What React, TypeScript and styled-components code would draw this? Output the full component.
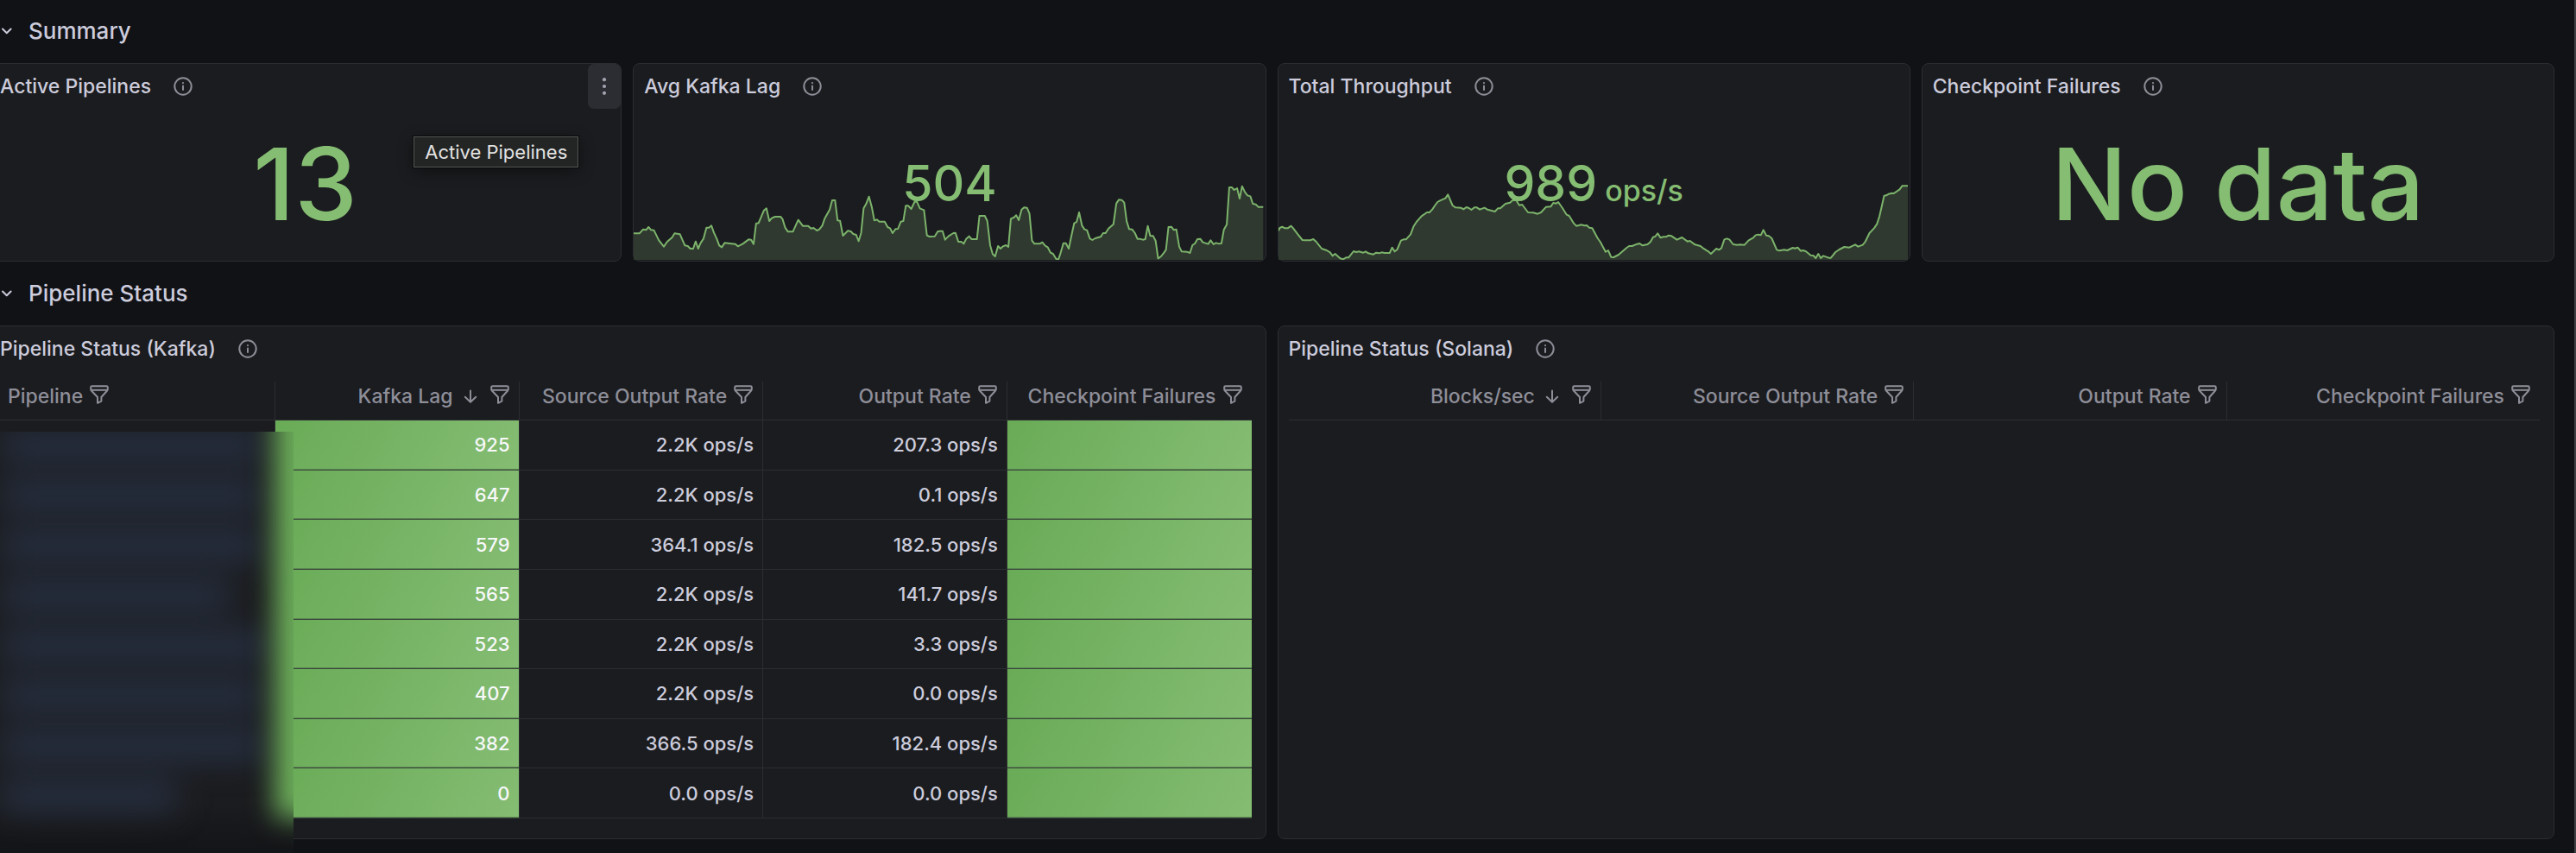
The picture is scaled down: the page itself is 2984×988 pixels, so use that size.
import React from "react";
import styled, { createGlobalStyle, css } from "styled-components";

const color = {
  page: "#111216",
  panel: "#1b1c1f",
  line: "#2c2d31",
  text: "#ccccdc",
  muted: "#8e8e99",
  green: "#85bd73",
};

const GlobalStyle = createGlobalStyle`
  *, *::before, *::after { box-sizing: border-box; }
  html { background: ${color.page}; }
  body {
    margin: 0;
    min-height: 100vh;
    overflow-x: hidden;
    background: ${color.page};
    border-right: 2px solid #3f4043;
    color: ${color.text};
    font-family: Inter, "Liberation Sans", sans-serif;
    font-size: 23px;
    font-weight: 500;
    line-height: 32px;
  }
  h2, h3 { margin: 0; font-weight: 500; }
  button { font: inherit; color: inherit; border: 0; background: none; padding: 0; cursor: pointer; }
`;

const Dashboard = styled.main`
  margin: -1px 23px 0 -13px;
  padding-bottom: 16px;
`;

const SectionHeader = styled.h2`
  height: 74px;
  display: flex;
  align-items: center;
  padding-left: 13px;
  font-size: 26px;
`;

const Toggle = styled.button`
  display: flex;
  align-items: center;
  gap: 18px;
`;

const PanelRow = styled.div<{ $columns: number }>`
  display: grid;
  grid-template-columns: repeat(${(p) => p.$columns}, minmax(0, 1fr));
  gap: 13px;
`;

const Panel = styled.section<{ $tall?: boolean }>`
  position: relative;
  display: flex;
  flex-direction: column;
  min-height: ${(p) => (p.$tall ? 595 : 230)}px;
  background: ${color.panel};
  border: 1px solid ${color.line};
  border-radius: 8px;
`;

const PanelHeader = styled.header`
  height: 52px;
  display: flex;
  align-items: center;
  justify-content: space-between;
  padding-left: 12px;
`;

const PanelTitle = styled.div`
  display: flex;
  align-items: center;
  gap: 26px;
  h3 { font-size: 23px; }
`;

const InfoButton = styled.button`
  display: flex;
  color: ${color.muted};
`;

const MenuButton = styled.button`
  width: 38px;
  height: 52px;
  display: flex;
  align-items: center;
  justify-content: center;
  border-radius: 7px;
  background: #2c2d32;
  color: #a3a3b0;
`;

const StatBody = styled.div`
  flex: 1;
  position: relative;
  display: flex;
  align-items: center;
  justify-content: center;
  padding-bottom: 2px;
`;

const StatValue = styled.div<{ $large?: boolean }>`
  position: relative;
  font-size: ${(p) => (p.$large ? 116 : 57)}px;
  line-height: ${(p) => (p.$large ? 140 : 70)}px;
  color: ${color.green};
  white-space: pre;
`;

const Unit = styled.span`
  font-size: 34px;
  line-height: 34px;
`;

const Spark = styled.svg`
  position: absolute;
  left: 0;
  bottom: 1px;
  width: calc(100% - 2px);
  height: 88px;
`;

const Tooltip = styled.div`
  position: absolute;
  top: 84px;
  right: 49px;
  padding: 0 12px;
  line-height: 34px;
  font-size: 22px;
  font-weight: 400;
  color: #e2e2e2;
  background: #232524;
  border: 1px solid #555756;
  outline: 1px solid #08090a;
  box-shadow: 0 4px 18px rgba(0, 0, 0, 0.45);
  white-space: nowrap;
`;

const TableBody = styled.div`
  padding: 12px 16px 0 12px;
`;

const DataTable = styled.table`
  width: 100%;
  table-layout: fixed;
  border-collapse: separate;
  border-spacing: 0;
`;

const FullTable = styled(DataTable)`
  height: 506px;
`;

const HeadCell = styled.th<{ $left?: boolean; $wide?: boolean }>`
  width: ${(p) => (p.$wide ? "22%" : "auto")};
  height: 45px;
  padding: 0 ${(p) => (p.$left ? 0 : 11)}px 11px ${(p) => (p.$left ? 9 : 0)}px;
  border-bottom: 1px solid ${color.line};
  border-right: 1px solid ${color.line};
  font-weight: 500;
  color: ${color.muted};
  white-space: nowrap;
  &:last-child { border-right: 0; }
`;

const HeadContent = styled.div<{ $left?: boolean }>`
  display: flex;
  align-items: center;
  justify-content: ${(p) => (p.$left ? "flex-start" : "flex-end")};
  gap: 8px;
`;

const Sort = styled.button`
  display: flex;
  align-items: center;
  gap: 8px;
`;

const FilterButton = styled.button<{ $spaced?: boolean }>`
  display: flex;
  padding-bottom: 4px;
  margin-left: ${(p) => (p.$spaced ? 3 : 0)}px;
`;

const Cell = styled.td<{ $filled?: boolean }>`
  padding: 0 10px 0 0;
  font-size: 22px;
  text-align: right;
  border-right: 1px solid ${color.line};
  border-bottom: 1px solid ${color.line};
  &:last-child { border-right: 0; }
  ${(p) =>
    p.$filled &&
    css`
      color: #f7f8fa;
      background: linear-gradient(120deg, #69ab57, #85bd73);
      background-clip: padding-box;
      border-bottom-color: #3a463c;
      box-shadow: inset 0 -1px 0 #5a8751;
    `}
`;

/* Frosted cover that hides the pipeline names. */
const Cover = styled.div`
  position: absolute;
  left: 12px;
  top: 122px;
  width: 340px;
  height: 488px;
  overflow: hidden;
  background: linear-gradient(#1b1c1f 430px, #141518 484px);
`;

const CoverEdge = styled.div`
  position: absolute;
  left: 318px;
  top: -60px;
  width: 120px;
  height: 508px;
  background: #6cad5a;
  filter: blur(15px);
`;

const CoverLines = styled.div`
  display: flex;
  flex-direction: column;
  gap: 26px;
  padding-left: 2px;
  filter: blur(18px);
`;

const CoverLine = styled.div`
  height: 32px;
  background: #283245;
`;

function InfoIcon() {
  return (
    <svg width="22" height="22" viewBox="0 0 22 22" fill="none" stroke="currentColor" strokeWidth="2" strokeLinecap="round">
      <circle cx="11" cy="11" r="9.7" />
      <path d="M11 10.6v4.4" />
      <circle cx="11" cy="7.1" r="1.1" fill="currentColor" stroke="none" />
    </svg>
  );
}

function FilterIcon() {
  return (
    <svg width="22" height="22" viewBox="0 0 22 22" fill="none" stroke="currentColor" strokeWidth="2" strokeLinejoin="round">
      <path d="M2.6 1.2h16.8c.8 0 1.4.6 1.4 1.4v2.1c0 .7-.3 1.3-.7 1.8L13.4 14v4.6L9 20.8V14L1.9 6.5c-.5-.5-.7-1.1-.7-1.8V2.6c0-.8.6-1.4 1.4-1.4z" />
      <path d="M1.6 5.8h18.8" />
    </svg>
  );
}

function ArrowDownIcon() {
  return (
    <svg width="24" height="22" viewBox="0 0 24 22" fill="none" stroke="currentColor" strokeWidth="2" strokeLinecap="round" strokeLinejoin="round">
      <path d="M12 4.5v13M5.8 11.8l6.2 6 6.2-6" />
    </svg>
  );
}

function ChevronIcon() {
  return (
    <svg width="15" height="22" viewBox="0 0 15 22" fill="none" stroke="currentColor" strokeWidth="2" strokeLinecap="round" strokeLinejoin="round">
      <path d="M3 8.5l4.8 4.8 4.8-4.8" />
    </svg>
  );
}

function DotsIcon() {
  return (
    <svg width="6" height="22" viewBox="0 0 6 22" fill="currentColor">
      <circle cx="3" cy="3.2" r="2.1" />
      <circle cx="3" cy="11" r="2.1" />
      <circle cx="3" cy="18.8" r="2.1" />
    </svg>
  );
}

const lagSeries =
  "10,631 24,631 33,617 40,619 46,609 52,619 59,620 71,655 83,677 91,660 103,645 109,631 122,634 134,673 141,675 147,684 154,684 160,659 166,684 172,664 179,649 186,611 192,611 198,604 204,628 211,650 217,673 223,679 230,664 242,666 256,668 262,676 274,667 288,652 294,653 300,668 306,597 312,595 325,551 331,544 338,588 344,578 352,573 365,573 370,581 376,610 383,625 395,625 408,584 419,605 432,605 439,614 445,612 453,621 459,617 466,604 472,579 484,548 490,516 497,516 503,586 509,587 516,639 528,622 535,624 541,633 548,636 554,658 560,629 566,544 572,529 579,503 586,541 592,586 598,583 604,590 617,590 624,609 630,613 636,630 643,616 649,615 656,590 662,588 668,535 674,535 681,546 690,519 695,521 702,544 712,550 719,638 725,642 738,641 745,625 750,623 757,623 763,653 771,641 783,630 788,629 795,660 802,660 808,667 814,650 821,641 827,651 840,651 846,570 859,570 865,588 872,673 878,703 884,711 891,675 897,684 903,676 910,672 916,678 922,580 929,576 935,568 941,585 948,548 954,541 961,542 967,562 973,656 979,667 992,667 998,662 1005,674 1011,679 1018,698 1024,702 1032,721 1037,721 1042,700 1049,665 1055,665 1062,684 1068,642 1075,596 1081,591 1087,558 1094,604 1100,617 1106,620 1113,649 1119,654 1126,648 1139,643 1145,630 1151,630 1158,614 1170,599 1177,527 1183,514 1190,515 1196,524 1202,589 1208,616 1215,617 1222,630 1228,650 1234,650 1241,653 1247,651 1253,605 1259,640 1266,640 1272,657 1278,718 1285,711 1291,700 1297,688 1303,609 1310,608 1316,619 1322,617 1329,677 1335,694 1348,695 1355,699 1361,672 1367,666 1373,651 1380,650 1386,662 1399,668 1405,655 1412,669 1418,664 1425,667 1431,666 1437,618 1444,600 1450,471 1456,471 1462,480 1469,474 1475,510 1481,467 1488,488 1494,499 1501,502 1507,528 1514,530 1520,539 1532,539";

const throughputSeries =
  "23,622 26,612 32,608 38,613 45,613 53,605 58,613 69,634 80,654 86,655 98,655 106,651 113,660 126,684 138,690 146,697 152,709 158,702 170,718 177,721 184,715 190,715 202,693 208,696 215,694 225,698 231,694 237,700 249,704 256,698 263,700 269,697 276,699 288,699 294,680 300,694 306,687 315,656 321,652 327,652 338,634 345,607 352,591 364,571 377,558 383,558 390,547 396,534 402,522 408,517 421,509 427,496 438,534 445,541 458,542 464,547 471,540 477,543 483,549 490,541 496,541 503,548 514,542 521,548 539,555 546,544 552,544 564,528 575,524 581,516 590,516 597,533 604,531 618,558 630,559 641,563 649,558 661,539 672,538 678,525 685,527 690,522 700,543 710,566 716,570 727,596 733,605 745,601 752,604 758,603 764,611 771,613 784,648 790,660 803,695 809,690 816,713 822,714 834,705 853,681 859,675 866,675 878,668 884,666 891,673 903,669 910,660 916,644 921,642 927,631 934,646 941,643 947,643 953,638 960,640 973,653 985,645 998,659 1004,657 1016,670 1029,675 1035,682 1048,694 1054,702 1067,684 1073,688 1079,682 1086,652 1092,649 1098,652 1107,669 1117,671 1123,670 1134,671 1144,655 1155,646 1160,638 1166,635 1173,637 1179,619 1186,638 1192,640 1199,648 1211,688 1217,691 1229,688 1236,690 1249,681 1254,683 1261,680 1268,692 1273,690 1280,693 1292,707 1298,708 1304,717 1310,702 1316,717 1322,709 1335,716 1340,716 1351,696 1360,687 1372,678 1384,680 1398,670 1405,677 1416,671 1422,660 1432,630 1443,613 1450,598 1456,571 1467,500 1472,499 1478,494 1485,491 1490,492 1504,478 1510,466 1524,466";

function Sparkline({ points, from, to }: { points: string; from: number; to: number }) {
  return (
    <Spark viewBox={`${from} 459 ${to - from} 264`} preserveAspectRatio="none" aria-hidden="true">
      <polygon points={`${from},723 ${points} ${to},723`} fill="#2f392f" />
      <polyline points={points} fill="none" stroke="#7cb36b" strokeWidth="2" strokeLinejoin="round" vectorEffect="non-scaling-stroke" />
    </Spark>
  );
}

function Title({ text, menu }: { text: string; menu?: boolean }) {
  return (
    <PanelHeader>
      <PanelTitle>
        <h3>{text}</h3>
        <InfoButton aria-label={`About ${text}`}>
          <InfoIcon />
        </InfoButton>
      </PanelTitle>
      {menu && (
        <MenuButton aria-label={`${text} menu`}>
          <DotsIcon />
        </MenuButton>
      )}
    </PanelHeader>
  );
}

function Section({ title, children }: { title: string; children: React.ReactNode }) {
  return (
    <div>
      <SectionHeader>
        <Toggle aria-expanded="true">
          <ChevronIcon />
          {title}
        </Toggle>
      </SectionHeader>
      {children}
    </div>
  );
}

type HeadProps = { text: string; left?: boolean; wide?: boolean; sorted?: boolean };

function Head({ text, left, wide, sorted }: HeadProps) {
  return (
    <HeadCell scope="col" $left={left} $wide={wide} aria-sort={sorted ? "descending" : undefined}>
      <HeadContent $left={left}>
        <Sort>
          {text}
          {sorted && <ArrowDownIcon />}
        </Sort>
        <FilterButton $spaced={sorted} aria-label={`Filter ${text}`}>
          <FilterIcon />
        </FilterButton>
      </HeadContent>
    </HeadCell>
  );
}

const kafkaRows = [
  ["925", "2.2K ops/s", "207.3 ops/s"],
  ["647", "2.2K ops/s", "0.1 ops/s"],
  ["579", "364.1 ops/s", "182.5 ops/s"],
  ["565", "2.2K ops/s", "141.7 ops/s"],
  ["523", "2.2K ops/s", "3.3 ops/s"],
  ["407", "2.2K ops/s", "0.0 ops/s"],
  ["382", "366.5 ops/s", "182.4 ops/s"],
  ["0", "0.0 ops/s", "0.0 ops/s"],
];

const nameWidths = [304, 300, 300, 264, 306, 300, 304, 202];

export default function App() {
  return (
    <>
      <GlobalStyle />
      <Dashboard>
        <Section title="Summary">
          <PanelRow $columns={4}>
            <Panel>
              <Title text="Active Pipelines" menu />
              <StatBody>
                <StatValue $large>13</StatValue>
              </StatBody>
              <Tooltip role="tooltip">Active Pipelines</Tooltip>
            </Panel>
            <Panel>
              <Title text="Avg Kafka Lag" />
              <StatBody>
                <Sparkline points={lagSeries} from={10} to={1532} />
                <StatValue>504</StatValue>
              </StatBody>
            </Panel>
            <Panel>
              <Title text="Total Throughput" />
              <StatBody>
                <Sparkline points={throughputSeries} from={23} to={1524} />
                <StatValue>
                  989<Unit> ops/s</Unit>
                </StatValue>
              </StatBody>
            </Panel>
            <Panel>
              <Title text="Checkpoint Failures" />
              <StatBody>
                <StatValue $large>No data</StatValue>
              </StatBody>
            </Panel>
          </PanelRow>
        </Section>
        <Section title="Pipeline Status">
          <PanelRow $columns={2}>
            <Panel $tall>
              <Title text="Pipeline Status (Kafka)" />
              <TableBody>
                <FullTable>
                  <thead>
                    <tr>
                      <Head text="Pipeline" left wide />
                      <Head text="Kafka Lag" sorted />
                      <Head text="Source Output Rate" />
                      <Head text="Output Rate" />
                      <Head text="Checkpoint Failures" />
                    </tr>
                  </thead>
                  <tbody>
                    {kafkaRows.map(([lag, source, output], i) => (
                      <tr key={i}>
                        <Cell />
                        <Cell $filled>{lag}</Cell>
                        <Cell>{source}</Cell>
                        <Cell>{output}</Cell>
                        <Cell $filled />
                      </tr>
                    ))}
                  </tbody>
                </FullTable>
              </TableBody>
              <Cover aria-hidden="true">
                <CoverLines>
                  {nameWidths.map((width, i) => (
                    <CoverLine key={i} style={{ width }} />
                  ))}
                </CoverLines>
                <CoverEdge />
              </Cover>
            </Panel>
            <Panel $tall>
              <Title text="Pipeline Status (Solana)" />
              <TableBody>
                <DataTable>
                  <thead>
                    <tr>
                      <Head text="Blocks/sec" sorted />
                      <Head text="Source Output Rate" />
                      <Head text="Output Rate" />
                      <Head text="Checkpoint Failures" />
                    </tr>
                  </thead>
                </DataTable>
              </TableBody>
            </Panel>
          </PanelRow>
        </Section>
      </Dashboard>
    </>
  );
}
